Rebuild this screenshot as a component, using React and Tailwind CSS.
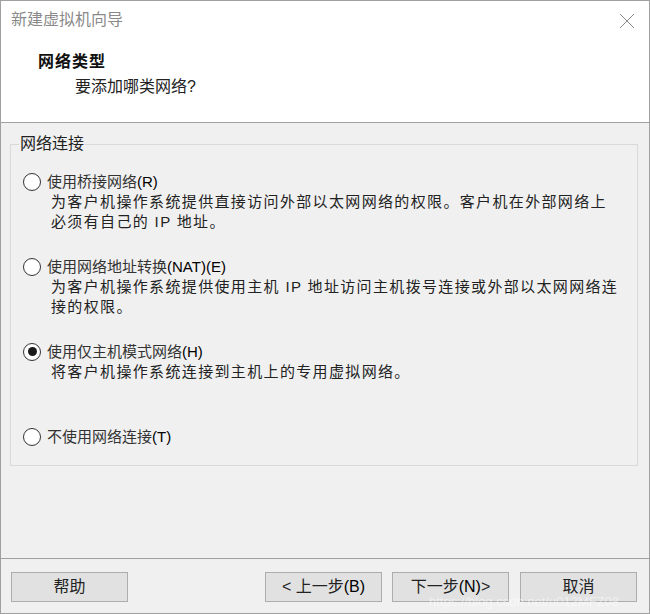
import React from "react";

const F = { fontFamily: '"Liberation Sans", "Noto Sans CJK SC", sans-serif' };

function Radio({ checked }) {
  return (
    <span className="w-[18px] h-[18px] rounded-full border border-[#333] bg-white flex items-center justify-center shrink-0">
      {checked && <span className="w-[9px] h-[9px] rounded-full bg-[#1a1a1a]" />}
    </span>
  );
}

function Option({ checked, label, lines }) {
  return (
    <div className="h-[85px] shrink-0 flex flex-col">
      <div className="h-[21px] flex items-center pl-[12px]">
        <Radio checked={checked} />
        <span className="ml-[6px] text-[15px] text-[#333] leading-[21px]">{label}</span>
      </div>
      {lines.map((l, i) => (
        <div key={i} className="h-[20px] pl-[40px] text-[15px] leading-[20px] tracking-[1.35px] text-[#222] whitespace-nowrap">
          {l}
        </div>
      ))}
    </div>
  );
}

function Btn({ children, w = "w-[117px]" }) {
  return (
    <div className={`${w} h-[30px] bg-[#e1e1e1] border border-[#adadad] flex items-center justify-center text-[16px] text-[#222]`}>
      {children}
    </div>
  );
}

export default function App() {
  return (
    <div style={F} className="w-[650px] h-[614px] border border-[#a0a0a0] bg-[#f0f0f0] flex flex-col relative overflow-hidden">
      <div className="h-[122px] bg-white border-b border-[#a0a0a0] flex flex-col shrink-0">
        <div className="h-[38px] flex items-center justify-between pl-[10px] pr-[14px]">
          <span className="text-[16px] text-[#8a8a8a]">新建虚拟机向导</span>
          <svg width="16" height="16" viewBox="0 0 16 16" className="mt-[1px]">
            <path d="M1 1 L15 15 M15 1 L1 15" stroke="#8a8a8a" strokeWidth="1" fill="none" />
          </svg>
        </div>
        <div className="mt-[12px] pl-[37px] text-[16px] font-bold text-[#111] leading-[22px] tracking-[1px]">网络类型</div>
        <div className="mt-[3px] pl-[74px] text-[16px] text-[#222] leading-[22px]">要添加哪类网络?</div>
      </div>

      <div className="flex-1 flex flex-col pt-[11px] pl-[9px] pr-[11px]">
        <fieldset className="border border-[#d9d9d9] h-[332px] px-0 pt-[17px]">
          <legend className="ml-[8px] px-[1px] text-[16px] text-[#222] leading-[20px]">网络连接</legend>
          <Option
            label={<>使用桥接网络<span className="text-[#000]">(R)</span></>}
            lines={["为客户机操作系统提供直接访问外部以太网网络的权限。客户机在外部网络上", "必须有自己的 IP 地址。"]}
          />
          <Option
            label={<>使用网络地址转换<span className="text-[#000]">(NAT)(E)</span></>}
            lines={["为客户机操作系统提供使用主机 IP 地址访问主机拨号连接或外部以太网网络连", "接的权限。"]}
          />
          <Option
            checked
            label={<>使用仅主机模式网络<span className="text-[#000]">(H)</span></>}
            lines={["将客户机操作系统连接到主机上的专用虚拟网络。"]}
          />
          <Option label={<>不使用网络连接<span className="text-[#000]">(T)</span></>} lines={[]} />
        </fieldset>
      </div>

      <div className="h-[55px] border-t border-[#a0a0a0] shrink-0 flex items-start pt-[13px] pl-[10px]">
        <Btn>帮助</Btn>
        <div className="ml-[137px]"><Btn>&lt; 上一步<span className="text-[#000]">(B)</span></Btn></div>
        <div className="ml-[10px]"><Btn>下一步<span className="text-[#000]">(N)</span> &gt;</Btn></div>
        <div className="ml-[11px]"><Btn>取消</Btn></div>
      </div>

      <div className="absolute left-[428px] top-[591px] text-[13px] text-white/50 whitespace-nowrap pointer-events-none">
        https://blog.csdn.net/u012MFZ08
      </div>
    </div>
  );
}
